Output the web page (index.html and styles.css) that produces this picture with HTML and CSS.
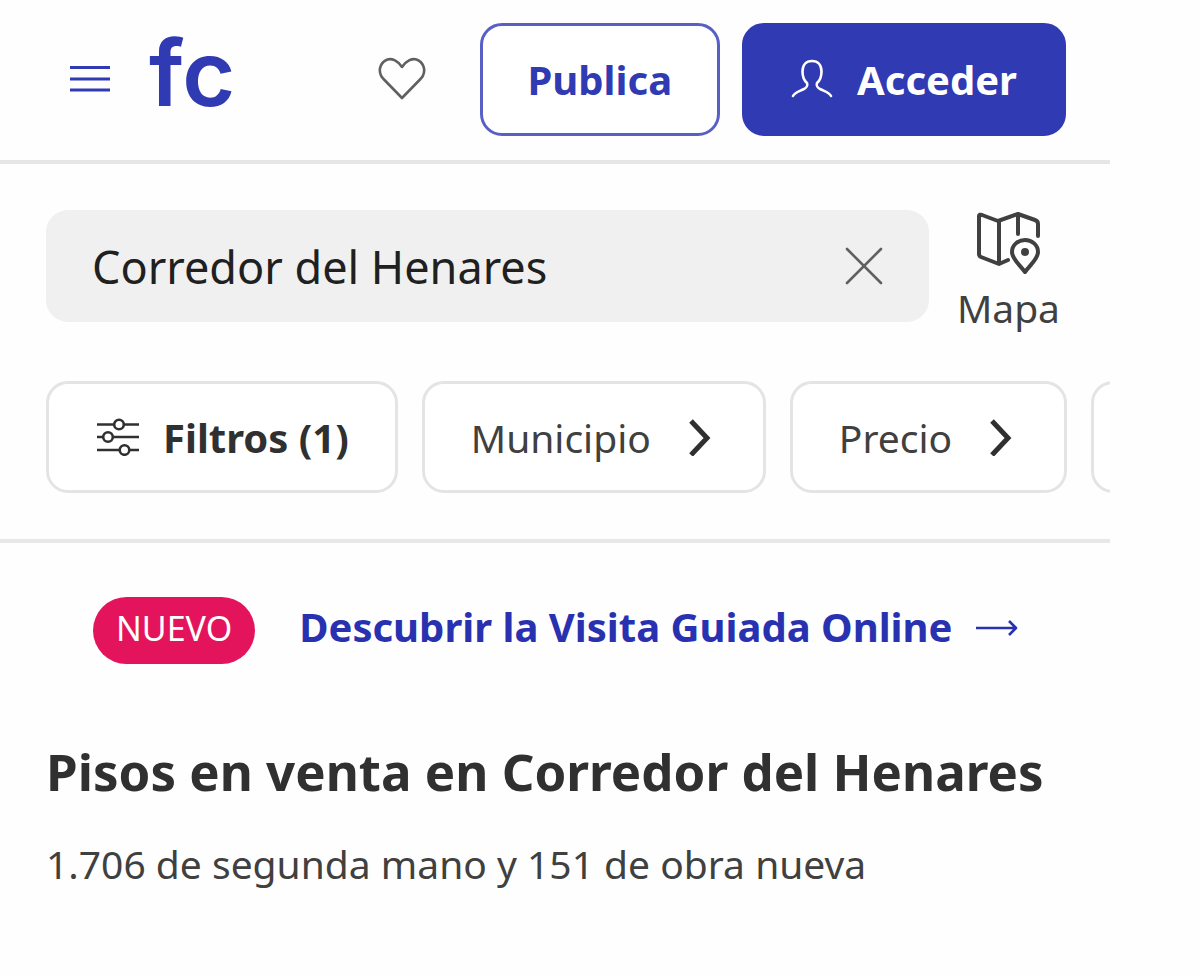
FILE: index.html
```
<!DOCTYPE html>
<html lang="es">
<head>
  <meta charset="UTF-8">
  <meta name="viewport" content="width=device-width, initial-scale=1">
  <title>Pisos en venta en Corredor del Henares</title>
  <link rel="stylesheet" href="styles.css">
</head>
<body>
  <header class="header">
    <button class="icon-button" type="button" aria-label="Menú">
      <svg width="40" height="30" viewBox="0 0 40 30" fill="none" stroke="currentColor" stroke-width="3">
        <path d="M0 3.500h40M0 15h40M0 26h40"/>
      </svg>
    </button>
    <a class="logo" href="#">fc</a>
    <button class="icon-button favorites" type="button" aria-label="Favoritos">
      <svg width="48" height="44" viewBox="0 0 48 44" fill="none" stroke="currentColor" stroke-width="2.600" stroke-linejoin="round">
        <path d="M24 10C20 4 14 1 9.500 2.500C3 5 0 12 3 18.500C3.600 20 4.600 21 5.500 22L24 41L42.500 22C43.400 21 44.400 20 45 18.500C48 12 45 5 38.500 2.500C34 1 28 4 24 10Z"/>
      </svg>
    </button>
    <button class="button" type="button">Publica</button>
    <button class="button button-primary" type="button">
      <svg width="42" height="40" viewBox="0 0 42 40" fill="none" stroke="currentColor" stroke-width="2.600" stroke-linecap="round" stroke-linejoin="round">
        <path d="M2 37C4 33 8 32.500 12 30.500C16 28.500 17 27 16 24C12.500 21 11.500 17 11.500 12.500C11.500 6 15 2 21 2C27 2 30.500 6 30.500 12.500C30.500 17 29.500 21 26 24C25 27 26 28.500 30 30.500C34 32.500 38 33 40 37"/>
      </svg>
      Acceder
    </button>
  </header>

  <section class="search">
    <div class="search-row">
      <div class="search-box">
        <input class="search-input" type="text" value="Corredor del Henares" aria-label="Ubicación">
        <button class="icon-button clear" type="button" aria-label="Borrar">
          <svg width="38" height="38" viewBox="0 0 38 38" fill="none" stroke="currentColor" stroke-width="2.600" stroke-linecap="round">
            <path d="M2 2L36 36M36 2L2 36"/>
          </svg>
        </button>
      </div>
      <a class="map-link" href="#">
        <svg width="64" height="62" viewBox="0 0 64 62" fill="none" stroke="currentColor" stroke-width="4" stroke-linecap="round" stroke-linejoin="round">
          <path d="M32 48L23 52L5 45Q3 44 3 42V4Q3 2 6 3L22 9L42 2L59 8Q62 9 62 12V24M23 10V51M42 3V22"/>
          <path d="M49 60C44 53 36 47 36 40C36 33 42 28 49 28C56 28 62 33 62 40C62 47 54 53 49 60Z"/>
          <circle cx="49" cy="40" r="2"/>
        </svg>
        Mapa
      </a>
    </div>
    <div class="filters">
      <button class="filter filter-active" type="button">
        <svg width="42" height="38" viewBox="0 0 42 38" fill="none" stroke="currentColor" stroke-width="2.600">
          <path d="M0 6.500h17M27 6.500h15M0 19h6M16 19h26M0 32h22M33 32h9"/>
          <circle cx="22" cy="6.500" r="4.800"/>
          <circle cx="11" cy="19" r="4.800"/>
          <circle cx="27.500" cy="32" r="4.800"/>
        </svg>
        Filtros (1)
      </button>
      <button class="filter" type="button">
        Municipio
        <svg class="chevron" width="22" height="38" viewBox="0 0 22 38" fill="none" stroke="currentColor" stroke-width="5">
          <path d="M2 3L18 20L2 37"/>
        </svg>
      </button>
      <button class="filter" type="button">
        Precio
        <svg class="chevron" width="22" height="38" viewBox="0 0 22 38" fill="none" stroke="currentColor" stroke-width="5">
          <path d="M2 3L18 20L2 37"/>
        </svg>
      </button>
      <button class="filter filter-next" type="button" aria-label="Más filtros"></button>
    </div>
  </section>

  <main>
    <div class="promo">
      <span class="badge">NUEVO</span>
      <a class="promo-link" href="#">
        Descubrir la Visita Guiada Online
        <svg width="42" height="20" viewBox="0 0 42 20" fill="none" stroke="currentColor" stroke-width="2.600" stroke-linejoin="round">
          <path d="M0 11h40M33 4L40 11L33 18"/>
        </svg>
      </a>
    </div>
    <h1>Pisos en venta en Corredor del Henares</h1>
    <p class="summary">1.706 de segunda mano y 151 de obra nueva</p>
  </main>
</body>
</html>
```
FILE: styles.css
```
* {
  box-sizing: border-box;
}
body {
  margin: 0;
  padding-right: 90px;
  background: #fefefe;
  color: #303030;
  font-family: "Noto Sans", "Open Sans", sans-serif;
  font-size: 39px;
  overflow-x: hidden;
}
button,
input {
  font: inherit;
  color: inherit;
}
button {
  cursor: pointer;
}
svg {
  display: block;
  flex: none;
}
a {
  text-decoration: none;
}
.header {
  display: flex;
  align-items: center;
  height: 164px;
  padding: 0 44px 2px 70px;
  border-bottom: 4px solid #e6e6e6;
  color: #303ab2;
}
.icon-button {
  padding: 0;
  border: 0;
  background: none;
}
.logo {
  margin-left: 39px;
  padding-bottom: 12px;
  color: #303ab2;
  font-family: Inter, sans-serif;
  font-size: 91px;
  font-weight: 600;
  line-height: 100px;
}
.favorites {
  margin-left: auto;
  margin-right: 54px;
  color: #606060;
}
.button {
  display: flex;
  align-items: center;
  gap: 24px;
  height: 113px;
  padding: 0 45px;
  border: 3px solid #5860c4;
  border-radius: 22px;
  background: #fff;
  color: #303ab2;
  font-size: 40px;
  font-weight: bold;
}
.button-primary {
  margin-left: 22px;
  padding: 0 46px;
  border-color: #303ab2;
  background: #303ab2;
  color: #fff;
}
.search {
  padding: 46px 0 46px 46px;
  border-bottom: 4px solid #e8e8e8;
}
.search-row {
  display: flex;
  align-items: flex-start;
  gap: 28px;
  padding-right: 50px;
}
.search-box {
  display: flex;
  flex: 1;
  align-items: center;
  min-width: 0;
  height: 112px;
  padding: 0 46px;
  border-radius: 22px;
  background: #f0f0f0;
}
.search-input {
  flex: 1;
  min-width: 0;
  padding: 0;
  border: 0;
  outline: none;
  background: none;
  color: #202020;
  font-size: 45px;
}
.clear {
  color: #606060;
}
.map-link {
  display: flex;
  flex-direction: column;
  align-items: center;
  gap: 6px;
  padding-top: 2px;
  color: #404040;
  line-height: 56px;
}
.filters {
  display: flex;
  gap: 24px;
  margin-top: 45px;
  overflow: hidden;
}
.filter {
  display: flex;
  flex: none;
  align-items: center;
  gap: 38px;
  height: 112px;
  padding: 0 52px 0 46px;
  border: 3px solid #e4e4e4;
  border-radius: 22px;
  background: #fff;
  color: #404040;
}
.filter-active {
  gap: 24px;
  padding: 0 46px 0 48px;
  color: #303030;
  font-size: 40px;
  font-weight: bold;
}
.chevron {
  color: #303030;
}
.filter-next {
  width: 280px;
}
.promo {
  display: flex;
  align-items: center;
  gap: 44px;
  padding: 54px 46px 0 93px;
}
.badge {
  padding: 0 23px 4px;
  border-radius: 34px;
  background: #e4145c;
  color: #fff;
  font-size: 34px;
  line-height: 63px;
}
.promo-link {
  display: flex;
  align-items: center;
  gap: 24px;
  padding-bottom: 8px;
  color: #2832b0;
  font-size: 40px;
  font-weight: bold;
  white-space: nowrap;
}
h1 {
  margin: 75px 0 0 46px;
  font-size: 51px;
  line-height: 64px;
  white-space: nowrap;
}
.summary {
  margin: 33px 0 0 46px;
  color: #404040;
  line-height: 56px;
}
```
